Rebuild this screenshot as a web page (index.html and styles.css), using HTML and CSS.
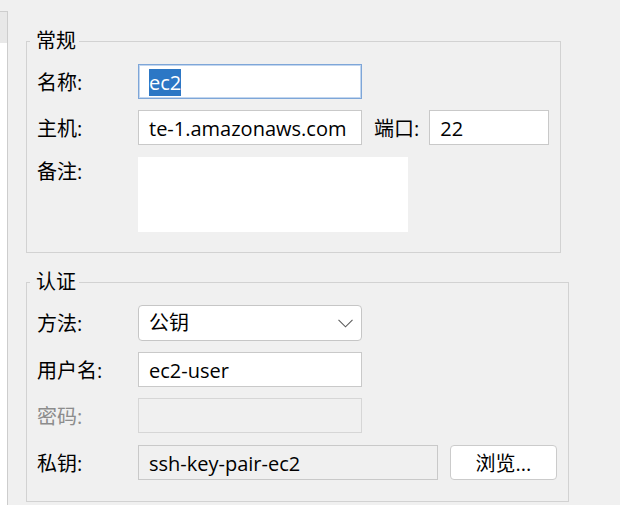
FILE: index.html
```html
<!DOCTYPE html>
<html lang="zh">
<head>
<meta charset="utf-8">
<title>会话属性</title>
<link rel="stylesheet" href="styles.css">
</head>
<body>
<div class="window">
  <div class="sidebar">
    <div class="sidebar-head"></div>
    <div class="sidebar-body"></div>
  </div>
  <div class="main">
    <fieldset class="group group-general">
      <legend>常规</legend>
      <div class="form">
        <div class="label">名称:</div>
        <div class="field field-focus name"><span class="sel">ec2</span></div>

        <div class="label">主机:</div>
        <div class="row">
          <div class="field host">te-1.amazonaws.com</div>
          <div class="label port-label">端口:</div>
          <div class="field port">22</div>
        </div>

        <div class="label label-top">备注:</div>
        <div class="notes"></div>
      </div>
    </fieldset>

    <fieldset class="group group-auth">
      <legend>认证</legend>
      <div class="form form-auth">
        <div class="label">方法:</div>
        <div class="field select">
          <span>公钥</span>
          <svg class="chevron" width="15" height="9" viewBox="0 0 15 9"><polyline points="0.5,0.8 7.5,7.8 14.5,0.8" fill="none" stroke="#5c5c5c" stroke-width="1.1"/></svg>
        </div>

        <div class="label">用户名:</div>
        <div class="field user">ec2-user</div>

        <div class="label label-disabled">密码:</div>
        <div class="field field-disabled password"></div>

        <div class="label key-label">私钥:</div>
        <div class="row key-row">
          <div class="field field-readonly key">ssh-key-pair-ec2</div>
          <div class="button">浏览...</div>
        </div>
      </div>
    </fieldset>
  </div>
</div>
</body>
</html>
```

FILE: styles.css
```css
html, body {
  margin: 0;
  padding: 0;
  background: #f0f0f0;
}

body {
  font-family: "Open Sans", "Noto Sans CJK SC", sans-serif;
  font-size: 20px;
  color: #000;
}

.window {
  display: flex;
  width: 620px;
  height: 505px;
  overflow: hidden;
}

.sidebar {
  width: 7px;
  margin-top: 11px;
  border-top: 1px solid #cdcdcd;
  border-right: 1px solid #cdcdcd;
  display: flex;
  flex-direction: column;
}

.sidebar-head {
  height: 31px;
  background: #e8e8e8;
}

.sidebar-body {
  flex: 1;
  background: #ffffff;
}

.main {
  padding-left: 18px;
  padding-top: 31px;
}

.group {
  margin: 0;
  border: 1px solid #d2d2d2;
  padding: 13px 10px 20px 10px;
  box-sizing: border-box;
  min-width: 0;
}

.group legend {
  font-size: 20px;
  line-height: 20px;
  padding: 0 3px 0 6px;
  margin-left: -7px;
}

.group-general {
  width: 535px;
}

.group-auth {
  width: 543px;
  margin-top: 19px;
  padding-bottom: 21px;
}

.form {
  display: grid;
  grid-template-columns: 101px 1fr;
  grid-template-rows: 35px 35px 76px;
  row-gap: 11px;
  align-items: center;
}

.form-auth {
  grid-template-rows: 36px 35px 35px 36px;
}

.label {
  line-height: 28px;
  padding-top: 2px;
  white-space: nowrap;
}

.label-top {
  align-self: start;
  margin-top: 0;
}

.label-disabled {
  color: #8c8c8c;
}

.field {
  box-sizing: border-box;
  height: 35px;
  width: 224px;
  border: 1px solid #c9c9c9;
  background: #ffffff;
  padding-left: 10px;
  line-height: 35px;
  white-space: nowrap;
  overflow: hidden;
}

.field-focus {
  border-color: #7ea6d8;
  box-shadow: inset 0 0 0 1px #c2d6ef;
  line-height: 33px;
}

.sel {
  display: inline-block;
  background: #2c77c5;
  color: #ffffff;
  line-height: 27px;
  vertical-align: middle;
  margin-top: -2px;
}

.row {
  display: flex;
  align-items: center;
}

.port-label {
  margin-left: 12px;
}

.port {
  width: 120px;
  margin-left: 10px;
}

.notes {
  width: 270px;
  height: 75px;
  background: #ffffff;
  margin-top: 1px;
}

.select {
  height: 36px;
  line-height: 36px;
  border-color: #c6c6c6;
  border-radius: 4px;
  display: flex;
  justify-content: space-between;
  align-items: center;
  padding-right: 8px;
}

.chevron {
  display: block;
}

.field-disabled {
  background: #f0f0f0;
  border-color: #d6d6d6;
}

.field-readonly {
  background: #f0f0f0;
  border-color: #c9c9c9;
}

.key-row,
.key-label {
  margin-top: 1px;
}

.key {
  width: 300px;
}

.button {
  box-sizing: border-box;
  width: 107px;
  height: 35px;
  margin-left: 12px;
  border: 1px solid #cbcbcb;
  border-radius: 4px;
  background: #ffffff;
  text-align: center;
  line-height: 35px;
}
```
